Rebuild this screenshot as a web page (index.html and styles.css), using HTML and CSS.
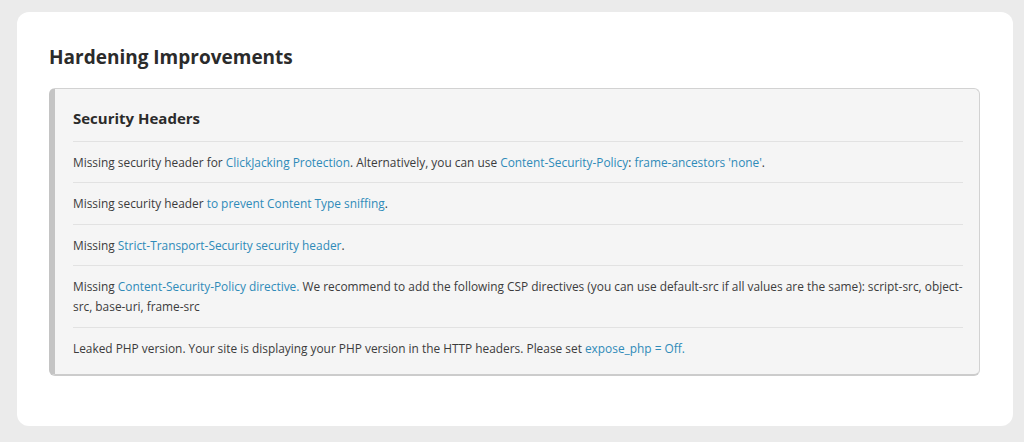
FILE: index.html
```html
<!DOCTYPE html>
<html lang="en">
<head>
    <meta charset="UTF-8">
    <meta name="viewport" content="width=device-width, initial-scale=1.0">
    <title>Hardening Improvements</title>
    <link rel="stylesheet" href="styles.css">
</head>
<body>

    <!-- Cartão principal -->
    <div class="card">
        <h2 class="card-title">Hardening Improvements</h2>

        <!-- Grupo de recomendações -->
        <div class="notice">
            <h3 class="notice-title">Security Headers</h3>
            <ul class="notice-list">
                <li>Missing security header for <a href="#">ClickJacking Protection</a>. Alternatively, you can use <a href="#">Content-Security-Policy</a>: <a href="#">frame-ancestors 'none'</a>.</li>
                <li>Missing security header <a href="#">to prevent Content Type sniffing</a>.</li>
                <li>Missing <a href="#">Strict-Transport-Security security header</a>.</li>
                <li>Missing <a href="#">Content-Security-Policy directive.</a> We recommend to add the following CSP directives (you can use default-src if all values are the same): script-src, object-src, base-uri, frame-src</li>
                <li>Leaked PHP version. Your site is displaying your PHP version in the HTTP headers. Please set <a href="#">expose_php = Off.</a></li>
            </ul>
        </div>
    </div>

</body>
</html>
```

FILE: styles.css
```css
* {
    box-sizing: border-box;
    margin: 0;
    padding: 0;
}

body {
    background-color: #ebebeb;
    font-family: "Open Sans", "Liberation Sans", sans-serif;
    color: #3c3c3c;
    padding: 12px 11px 0 17px;
}

/* Cartão branco */
.card {
    background-color: #ffffff;
    border-radius: 12px;
    padding: 32px 33px 50px 32px;
}

.card-title {
    font-size: 19px;
    font-weight: 700;
    line-height: 26px;
    color: #2b2b2b;
    margin-bottom: 18px;
}

/* Caixa cinza com borda à esquerda */
.notice {
    background-color: #f5f5f5;
    border: 1px solid #d2d2d2;
    border-left: 6px solid #c4c4c4;
    border-bottom: 2px solid #cccccc;
    border-radius: 6px;
    padding: 18px 16px 6px 18px;
}

.notice-title {
    font-size: 15px;
    font-weight: 700;
    line-height: 22px;
    color: #2b2b2b;
    padding-bottom: 12px;
}

.notice-list {
    list-style: none;
}

.notice-list li {
    font-size: 11.88px;
    line-height: 20px;
    border-top: 1px solid #e2e2e2;
    padding: 10px 0 10.4px;
}

.notice-list a {
    color: #2f8bb9;
    text-decoration: none;
}
```
